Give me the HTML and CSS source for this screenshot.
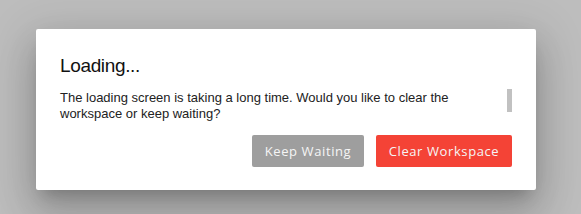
FILE: index.html
```html
<!DOCTYPE html>
<html lang="en">
<head>
  <meta charset="UTF-8">
  <title>Loading</title>
  <link rel="stylesheet" href="styles.css">
</head>
<body>
  <div class="dialog">
    <h2 class="dialog-title">Loading...</h2>
    <div class="dialog-content">
      <p>The loading screen is taking a long time. Would you like to clear the workspace or keep waiting?</p>
      <div class="scroll-thumb"></div>
    </div>
    <div class="dialog-actions">
      <button class="btn btn-wait">Keep Waiting</button>
      <button class="btn btn-clear">Clear Workspace</button>
    </div>
  </div>
</body>
</html>
```

FILE: styles.css
```css
body {
  margin: 0;
  padding: 29px 0 0 36px;
  background: #bdbdbd;
  font-family: "Liberation Sans", Arial, sans-serif;
  height: 214px;
  box-sizing: border-box;
  overflow: hidden;
}

.dialog {
  width: 500px;
  height: 161px;
  box-sizing: border-box;
  background: white;
  border-radius: 2px;
  padding: 25px 24px 0 24px;
  box-shadow: 0 11px 15px -7px rgba(0,0,0,0.2), 0 24px 38px 3px rgba(0,0,0,0.14), 0 9px 46px 8px rgba(0,0,0,0.12);
}

.dialog-title {
  margin: 0;
  font-size: 19px;
  font-weight: normal;
  letter-spacing: -0.35px;
  line-height: 24px;
  color: #111;
}

.dialog-content {
  display: flex;
  justify-content: space-between;
  align-items: flex-start;
  margin-top: 12px;
}

.dialog-content p {
  margin: 0;
  width: 420px;
  font-size: 13px;
  line-height: 16px;
  color: #222;
}

.scroll-thumb {
  width: 5px;
  height: 23px;
  margin-top: -1px;
  background: #c1c1c1;
}

.dialog-actions {
  display: flex;
  justify-content: flex-end;
  gap: 12px;
  margin-top: 13px;
}

.btn {
  border: none;
  border-radius: 2px;
  height: 32px;
  padding: 0 12px;
  color: #f5f5f5;
  font-family: "Open Sans", sans-serif;
  font-size: 13px;
  letter-spacing: 0.6px;
  cursor: pointer;
}

.btn-wait {
  width: 112px;
  background: #9e9e9e;
}

.btn-clear {
  width: 136px;
  background: #f44336;
}
```
